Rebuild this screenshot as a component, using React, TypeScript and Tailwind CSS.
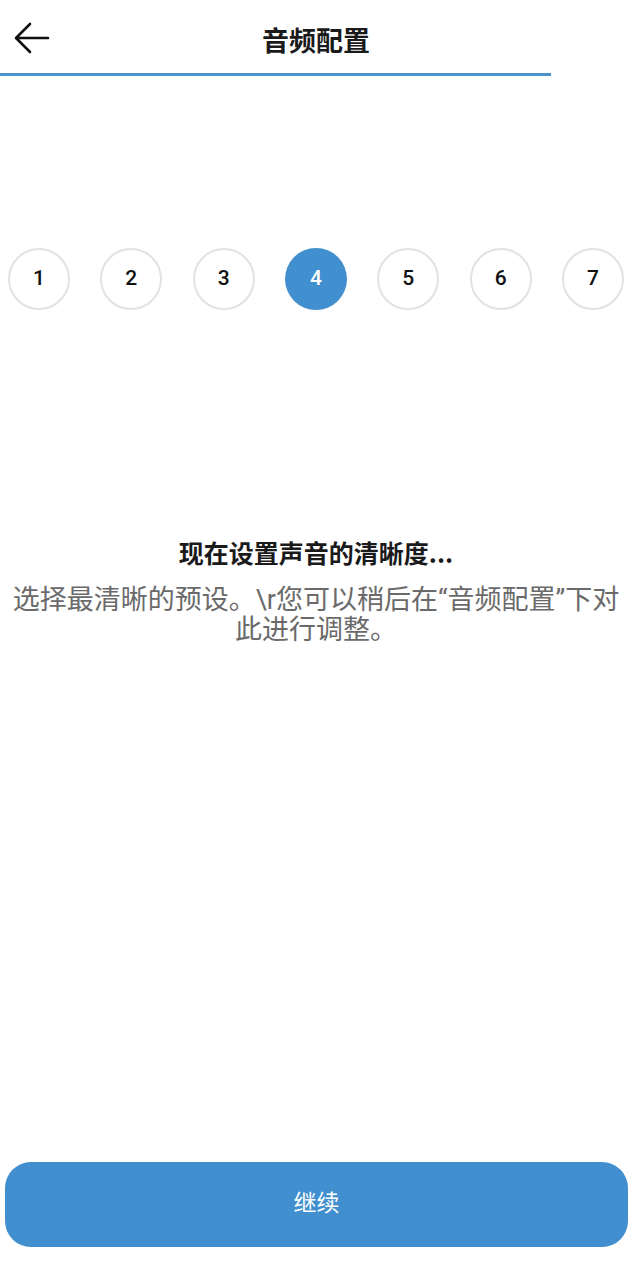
import React from "react";

const steps = [1, 2, 3, 4, 5, 6, 7];

export default function App() {
  return (
    <div
      className="flex h-[1269px] w-[643px] flex-col bg-white"
      style={{ fontFamily: '"Noto Sans CJK SC", "Noto Sans", sans-serif' }}
    >
      {/* Header */}
      <div className="relative flex h-[73px] items-center justify-center pr-[11px]">
        <button className="absolute left-[13px] top-[22px] flex h-[32px] w-[38px] items-center justify-center">
          <svg width="36" height="32" viewBox="0 0 36 32" fill="none">
            <path
              d="M34 16 H3 M16 2 L2 16 L16 30"
              stroke="#111"
              strokeWidth="2.6"
              strokeLinecap="round"
              strokeLinejoin="round"
            />
          </svg>
        </button>
        <div className="mt-[6px] text-[27px] font-bold leading-none text-[#1a1a1a]">音频配置</div>
      </div>
      <div className="h-[3px] w-[551px] bg-[#4a93cb]" />

      {/* Steps */}
      <div className="mt-[172px] flex items-center justify-between pl-[8px] pr-[19px]">
        {steps.map((s) =>
          s === 4 ? (
            <div
              key={s}
              className="flex h-[62px] w-[62px] items-center justify-center rounded-full bg-[#418fce] text-[21px] font-medium text-white"
              style={{ fontFamily: 'Roboto, "Noto Sans", sans-serif' }}
            >
              {s}
            </div>
          ) : (
            <div
              key={s}
              className="flex h-[62px] w-[62px] items-center justify-center rounded-full border-2 border-[#e2e2e2] text-[21px] font-medium text-[#111]"
              style={{ fontFamily: 'Roboto, "Noto Sans", sans-serif' }}
            >
              {s}
            </div>
          )
        )}
      </div>

      {/* Text */}
      <div className="mt-[227px] flex flex-col items-center pl-[8px] pr-[19px] text-center">
        <div className="text-[25px] font-bold leading-[30px] text-[#1a1a1a]">现在设置声音的清晰度...</div>
        <div className="mt-[17px] text-[27px] leading-[27px] text-[#6a6a6a]">
          选择最清晰的预设。<span style={{ fontFamily: 'Roboto, "Noto Sans", sans-serif' }}>\r</span>您可以稍后在
          <span style={{ fontFamily: 'Roboto, "Noto Sans", sans-serif' }}>“</span>音频配置
          <span style={{ fontFamily: 'Roboto, "Noto Sans", sans-serif' }}>”</span>下对此进行调整。
        </div>
      </div>

      <div className="flex-1" />

      {/* Button */}
      <div className="mb-[22px] pl-[5px] pr-[15px]">
        <button className="flex h-[85px] w-full items-center justify-center rounded-[26px] bg-[#418fce] pb-[6px] text-[23px] text-white">
          继续
        </button>
      </div>
    </div>
  );
}
